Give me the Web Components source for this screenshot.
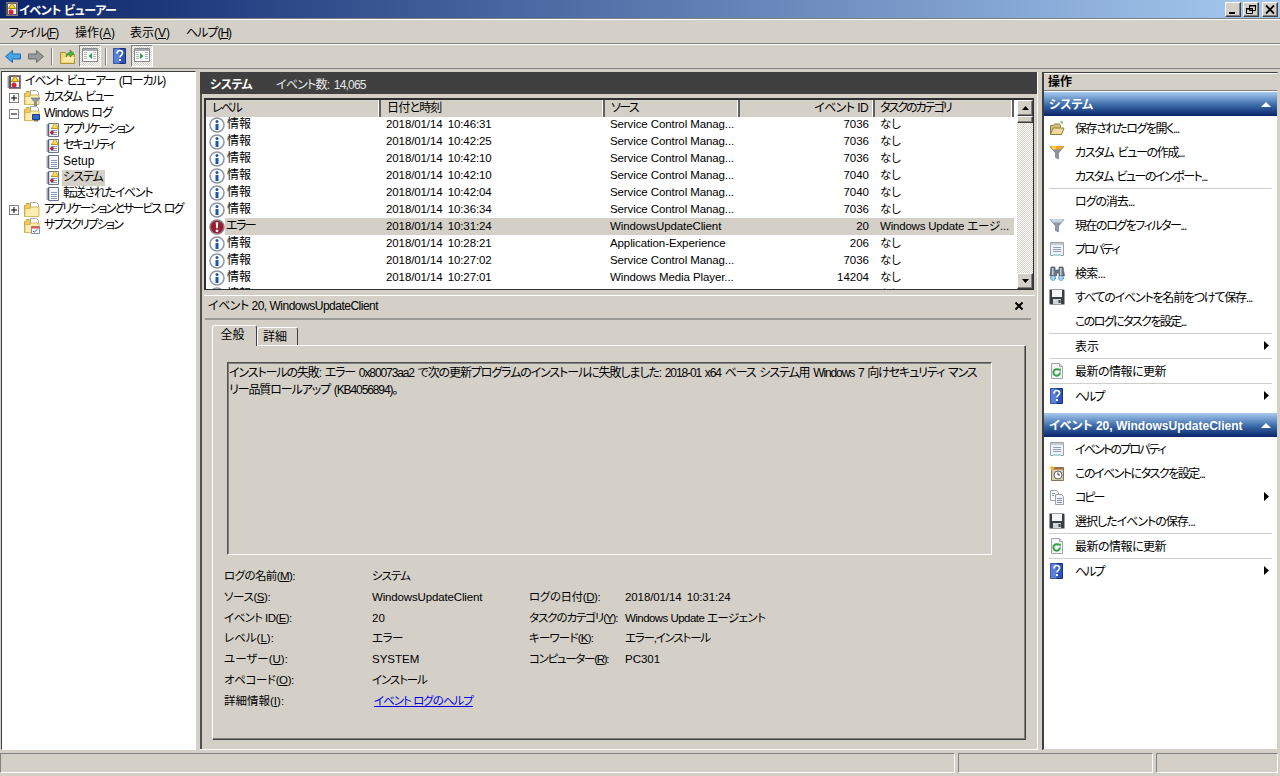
<!DOCTYPE html>
<html lang="ja">
<head>
<meta charset="utf-8">
<title>イベント ビューアー</title>
<style>
html, body { margin: 0; height: 100%; overflow: hidden; }
body {
    background: #d4d0c8;
    color: #000;
    font: 12px "Liberation Sans", "Noto Sans CJK JP", sans-serif;
    font-feature-settings: "palt";
}
#app { display: flex; flex-direction: column; width: 1280px; height: 776px; }
#main { flex: 1; display: flex; min-height: 0; }
</style>
</head>
<body>
<div id="app">
    <ev-titlebar style="letter-spacing:-.4px">イベント ビューアー</ev-titlebar>
    <ev-menubar>
        <span style="letter-spacing:-1.1px">ファイル(<u>F</u>)</span>
        <span>操作(<u>A</u>)</span>
        <span>表示(<u>V</u>)</span>
        <span style="letter-spacing:-1px">ヘルプ(<u>H</u>)</span>
    </ev-menubar>
    <ev-toolbar></ev-toolbar>
    <div id="main">
        <ev-tree>
            <ev-tree-item style="letter-spacing:-1.3px;word-spacing:2px" level="0" icon="root">イベント ビューアー (ローカル)</ev-tree-item>
            <ev-tree-item style="letter-spacing:-1.6px;word-spacing:2px" level="1" icon="folderfilter" toggle="+">カスタム ビュー</ev-tree-item>
            <ev-tree-item style="letter-spacing:-.6px" level="1" icon="folderlog" toggle="-">Windows ログ</ev-tree-item>
            <ev-tree-item style="letter-spacing:-2px" level="2" icon="log">アプリケーション</ev-tree-item>
            <ev-tree-item style="letter-spacing:-1.8px" level="2" icon="log">セキュリティ</ev-tree-item>
            <ev-tree-item level="2" icon="note">Setup</ev-tree-item>
            <ev-tree-item style="letter-spacing:-1px" level="2" icon="log" selected>システム</ev-tree-item>
            <ev-tree-item style="letter-spacing:-1.3px" level="2" icon="note">転送されたイベント</ev-tree-item>
            <ev-tree-item style="letter-spacing:-1.9px;word-spacing:2px" level="1" icon="foldersvc" toggle="+">アプリケーションとサービス ログ</ev-tree-item>
            <ev-tree-item style="letter-spacing:-1.9px" level="1" icon="foldersub">サブスクリプション</ev-tree-item>
        </ev-tree>
        <ev-center>
            <ev-grid>
                <ev-row level="情報" date="2018/01/14 10:46:31" source="Service Control Manag..." eid="7036" task="なし"></ev-row>
                <ev-row level="情報" date="2018/01/14 10:42:25" source="Service Control Manag..." eid="7036" task="なし"></ev-row>
                <ev-row level="情報" date="2018/01/14 10:42:10" source="Service Control Manag..." eid="7036" task="なし"></ev-row>
                <ev-row level="情報" date="2018/01/14 10:42:10" source="Service Control Manag..." eid="7040" task="なし"></ev-row>
                <ev-row level="情報" date="2018/01/14 10:42:04" source="Service Control Manag..." eid="7040" task="なし"></ev-row>
                <ev-row level="情報" date="2018/01/14 10:36:34" source="Service Control Manag..." eid="7036" task="なし"></ev-row>
                <ev-row level="エラー" error date="2018/01/14 10:31:24" source="WindowsUpdateClient" eid="20" task="Windows Update エージ..."></ev-row>
                <ev-row level="情報" date="2018/01/14 10:28:21" source="Application-Experience" eid="206" task="なし"></ev-row>
                <ev-row level="情報" date="2018/01/14 10:27:02" source="Service Control Manag..." eid="7036" task="なし"></ev-row>
                <ev-row level="情報" date="2018/01/14 10:27:01" source="Windows Media Player..." eid="14204" task="なし"></ev-row>
                <ev-row level="情報" date="2018/01/14 10:26:58" source="Service Control Manag..." eid="7036" task="なし"></ev-row>
            </ev-grid>
            <ev-detail></ev-detail>
        </ev-center>
        <ev-actions>
            <ev-action-group label="システム">
                <ev-action style="letter-spacing:-1.4px" icon="open">保存されたログを開く...</ev-action>
                <ev-action style="letter-spacing:-1.3px;word-spacing:2px" icon="filtery">カスタム ビューの作成...</ev-action>
                <ev-action style="letter-spacing:-1.5px;word-spacing:2px">カスタム ビューのインポート...</ev-action>
                <ev-action style="letter-spacing:-1.1px" sep>ログの消去...</ev-action>
                <ev-action style="letter-spacing:-1.5px" icon="filter">現在のログをフィルター...</ev-action>
                <ev-action style="letter-spacing:-2px" icon="props">プロパティ</ev-action>
                <ev-action style="letter-spacing:-.8px" icon="binoc">検索...</ev-action>
                <ev-action style="letter-spacing:-1.2px" icon="save">すべてのイベントを名前をつけて保存...</ev-action>
                <ev-action style="letter-spacing:-1.6px">このログにタスクを設定...</ev-action>
                <ev-action sep more>表示</ev-action>
                <ev-action style="letter-spacing:-.5px" sep icon="refresh">最新の情報に更新</ev-action>
                <ev-action style="letter-spacing:-2px" sep icon="help" more>ヘルプ</ev-action>
            </ev-action-group>
            <ev-action-group label="イベント 20, WindowsUpdateClient">
                <ev-action style="letter-spacing:-1.8px" icon="props">イベントのプロパティ</ev-action>
                <ev-action style="letter-spacing:-1.5px" icon="clock">このイベントにタスクを設定...</ev-action>
                <ev-action style="letter-spacing:-2px" icon="copy" more>コピー</ev-action>
                <ev-action style="letter-spacing:-1px" icon="save">選択したイベントの保存...</ev-action>
                <ev-action style="letter-spacing:-.5px" sep icon="refresh">最新の情報に更新</ev-action>
                <ev-action style="letter-spacing:-2px" sep icon="help" more>ヘルプ</ev-action>
            </ev-action-group>
        </ev-actions>
    </div>
    <ev-statusbar></ev-statusbar>
</div>

<script>
const RAISED = 'border:1px solid; border-color:#fff #404040 #404040 #fff; box-shadow:inset -1px -1px #808080;';

const logBase = `<path d="M3.500 1.500h10v13h-10z" fill="#f6f8fc" stroke="#67748f"/>
    <path d="M1.500 3h3M1.500 5h3M1.500 7h3M1.500 9h3M1.500 11h3M1.500 13h3" stroke="#46536e"/>
    <path d="M6 6.500h6M6 8.500h6M6 10.500h6M6 12.500h6" stroke="#8a9ab8"/>`;
const folderBack = `<path d="M.5 14.500v-11h1l1-2h3l1 2h8v11z" fill="#eec95c" stroke="#c9a64a"/>
    <path d="M6.500 .5h6l2 2v7h-8z" fill="#fff" stroke="#a8a8a8"/>`;
const folderFront = `<path d="M1 14.500v-8h5l1-1.500h8v9.500z" fill="#fdeeb0" stroke="#d8b65c"/>`;
const pane = (inner) => `<path d="M.5 .5h15v13h-15z" fill="#fff" stroke="#8a8a8a"/><path d="M1 1h14v2H1z" fill="#a3acb8"/>
    <path d="M2 4.500h3M2 6.500h3M2 8.500h3M2 10.500h3M11 4.500h3M11 6.500h3M11 8.500h3M11 10.500h3" stroke="#a9b7c6"/>${inner}`;

const ICONS = {
    root: `<path d="M3 1h12v14H3z" fill="#8d7a72"/><path d="M4.500 2.500h9v11h-9z" fill="#eef0f5" stroke="#59647c"/>
        <path d="M1.500 3h3M1.500 5h3M1.500 7h3M1.500 9h3M1.500 11h3M1.500 13h3" stroke="#333"/>
        <path d="M9 2l3.500 5.500h-7z" fill="#ffd83a" stroke="#a98410"/><circle cx="8" cy="11" r="2.500" fill="#d2263a"/>`,
    log: `${logBase}<path d="M10 .8l3.500 5.700h-7z" fill="#ffe04a" stroke="#b59014" stroke-width=".8"/><circle cx="7" cy="10.500" r="1.800" fill="#b8202e"/>`,
    note: logBase,
    folderfilter: `${folderBack}${folderFront}<path d="M7 8h9l-3.500 4V16h-2v-4z" fill="#8d99a8" stroke="#5d6978" stroke-width=".6"/>`,
    folderlog: `${folderBack}${folderFront}<path d="M8.500 8.500h7v5h-7z" fill="#2f6bd0" stroke="#1b3f8a"/><path d="M10 14h4v1.500h-4z" fill="#777"/>`,
    foldersvc: `${folderBack}${folderFront}`,
    foldersub: `${folderBack}${folderFront}<path d="M7.500 8.500h8v7h-8z" fill="#fff" stroke="#8390a5"/><path d="M7.500 8.500h8v2h-8z" fill="#d9534f"/><path d="M9 13l1.300 1.300L13.500 11" fill="none" stroke="#2a62c8"/>`,
    info: `<circle cx="8" cy="8" r="7" fill="#fff" stroke="#8b93a6" stroke-width="1.500"/><circle cx="8" cy="4.500" r="1.500" fill="#1d55b3"/><path d="M6.500 7h3v6h-3z" fill="#1d55b3"/>`,
    error: `<circle cx="8" cy="8" r="7" fill="#9c1c32" stroke="#8b8089" stroke-width="1.500"/><path d="M6.700 3.300h2.600l-.5 6h-1.600z" fill="#fff"/><circle cx="8" cy="11.800" r="1.400" fill="#fff"/>`,
    open: `<path d="M1.500 14.500v-9h3l1-1.500h5l1 1.500v2" fill="#d6be7b" stroke="#8f7c42"/><path d="M1.500 14.500l2.500-6.500h11l-2.500 6.500z" fill="#eeda9e" stroke="#8f7c42"/><path d="M11 2h3M13 1v3" stroke="#6dbb58"/>`,
    filtery: `<path d="M1 2.500h14L9.500 9v6l-3-1.500V9z" fill="#8793a3" stroke="#66717f" stroke-width=".6"/><path d="M1 2h14l-3 3.500H4z" fill="#f3a71e"/><circle cx="5" cy="3.500" r="2" fill="#ffd64a"/>`,
    filter: `<path d="M1 2.500h14L9.500 9v6l-3-1.500V9z" fill="#8d99a8" stroke="#66717f" stroke-width=".6"/><path d="M1 2h14l-3 3.500H4z" fill="#c6d4e2"/>`,
    props: `<path d="M1.500 1.500h13v13h-13z" fill="#f1f3f6" stroke="#9aa2ad"/><path d="M2 2h12v2H2z" fill="#c3cbd6"/><path d="M4 6.500h8M4 8.500h8M4 10.500h8" stroke="#8ea1b8"/><path d="M4 13h8v2H4z" fill="#b8d0e4"/>`,
    binoc: `<path d="M2 2h4v3h4V2h4l1.500 9h-5.500V8H7.500v3H1z" fill="#6d7683" stroke="#3e4550" stroke-width=".6"/><path d="M3 3h1.500v7H3zM11 3h1.500v7H11z" fill="#c8ced6"/><circle cx="4" cy="13" r="2.500" fill="#9fd0f0" stroke="#2b6ca8" stroke-dasharray="1 1"/><circle cx="12" cy="13" r="2.500" fill="#9fd0f0" stroke="#2b6ca8" stroke-dasharray="1 1"/>`,
    save: `<path d="M.5 .5h14l1 1v14H.5z" fill="#3a3f46"/><path d="M3 1h10v7H3z" fill="#f4f5f7"/><path d="M4 10h8v5H4z" fill="#d2d5da"/><path d="M9.500 11h2v3h-2z" fill="#3a3f46"/>`,
    refresh: `<path d="M2.500 .5h8l3 3v12h-11z" fill="#f4f5f6" stroke="#a0a4a8"/><path d="M10.500 .5v3h3" fill="#ddd" stroke="#a0a4a8"/><path d="M11 9.500a3.300 3.300 0 1 1-1.200-2.600" fill="none" stroke="#34a24a" stroke-width="2"/><path d="M8.500 5.500l3.500.2-.7 3.300z" fill="#34a24a"/>`,
    help: `<path d="M1.500 .5h12v15h-12z" fill="#2d55b8" stroke="#1d2f78"/><path d="M1.500 .5h6v15h-6z" fill="#5a80d8"/><path d="M5 5.500C5 3.500 6 2.500 7.800 2.500c1.800 0 2.700 1 2.700 2.500 0 2-2.500 2.200-2.500 4.500" fill="none" stroke="#fff" stroke-width="1.700"/><path d="M7 11h2v2H7z" fill="#fff"/>`,
    clock: `<path d="M2.500 2.500h12v13h-12z" fill="#d8cfa8" stroke="#85765a"/><path d="M2.500 2.500h12v2h-12z" fill="#a06a3c"/><circle cx="9" cy="10" r="4" fill="#fff" stroke="#5b6470"/><path d="M9 7.500V10h2" fill="none" stroke="#333"/><path d="M3 0l1 2 2 1-2 1-1 2-1-2-2-1 2-1z" fill="#f5c22e"/>`,
    copy: `<path d="M1.500 1.500h6l2 2v8h-8z" fill="#fff" stroke="#9aa2ad"/><path d="M6.500 5.500h6l2 2v8h-8z" fill="#f3f5f8" stroke="#9aa2ad"/><path d="M3 4.500h3M3 6.500h2M8 9.500h5M8 11.500h5M8 13.500h5" stroke="#7f92ad"/>`,
    back: `<path d="M.5 8.500l7-6v3.500h8v5h-8v3.500z" fill="#49a4ea" stroke="#1e6cb0"/>`,
    forward: `<path d="M16.500 8.500l-7-6v3.500h-8v5h8v3.500z" fill="#9a9a9a" stroke="#6a6a6a"/>`,
    up: `<path d="M.5 15.500v-11h5l1 2h8v9z" fill="#f1d777" stroke="#a98d3c"/><path d="M2 14l2-5h11l-2 5z" fill="#fbe9a5"/><path d="M6 9c0-3 2-4.500 4-4.500V2l4 3.500-4 3.500V6.800C8 6.800 7 7.500 6 9z" fill="#4eb23e" stroke="#2c7a22" stroke-width=".6"/>`,
    paneleft: pane(`<path d="M10 5v6L6.500 8z" fill="#2b9a3c"/>`),
    paneright: pane(`<path d="M6 5v6L9.500 8z" fill="#2b9a3c"/>`)
};

class EvIcon extends HTMLElement {
    connectedCallback() {
        const size = this.getAttribute('size') || 16;
        this.attachShadow({ mode: 'open' }).innerHTML = `
        <style>
        :host { display: block; width: ${size}px; height: ${size}px; flex: none; }
        svg { display: block; }
        </style>
        <svg width="${size}" height="${size}" viewBox="0 0 ${size} ${size}">${ICONS[this.getAttribute('name')] || ''}</svg>`;
    }
}

class EvTitlebar extends HTMLElement {
    connectedCallback() {
        this.attachShadow({ mode: 'open' }).innerHTML = `
        <style>
        :host {
            display: flex; align-items: center; height: 18px; padding: 0 2px 0 3px; flex: none;
            background: linear-gradient(90deg, #0a246a, #a6caf0);
            color: #fff; font-weight: bold;
        }
        .name { flex: 1; white-space: nowrap; }
        .buttons { display: flex; gap: 2px; }
        .btn { width: 14px; height: 13px; background: #d4d0c8; ${RAISED} position: relative; }
        .btn svg { display: block; }
        .buttons .btn:nth-child(2) { margin-right: 1px; }
        </style>
        <ev-icon name="root"></ev-icon>
        <span class="name"><slot></slot></span>
        <div class="buttons">
            <div class="btn"><svg width="14" height="13"><path d="M3 9h6v2H3z"/></svg></div>
            <div class="btn"><svg width="14" height="13"><path d="M5.500 2.500h6v5h-6zM2.500 5.500h6v5h-6z" fill="#d4d0c8" stroke="#000"/><path d="M5 2h7v1.500H5zM2 5h7v1.500H2z"/></svg></div>
            <div class="btn"><svg width="14" height="13"><path d="M3 2.500l8 8M11 2.500l-8 8" stroke="#000" stroke-width="1.800"/></svg></div>
        </div>`;
    }
}

class EvMenubar extends HTMLElement {
    connectedCallback() {
        this.attachShadow({ mode: 'open' }).innerHTML = `
        <style>
        :host {
            display: flex; align-items: center; height: 24px; padding-left: 9px; flex: none;
            border-top: 1px solid #808080; box-shadow: inset 0 1px #fff;
        }
        ::slotted(span:nth-child(1)) { width: 66px; }
        ::slotted(span:nth-child(2)) { width: 55px; }
        ::slotted(span:nth-child(3)) { width: 56px; }
        </style>
        <slot></slot>`;
    }
}

class EvToolbar extends HTMLElement {
    connectedCallback() {
        this.attachShadow({ mode: 'open' }).innerHTML = `
        <style>
        :host {
            display: flex; align-items: center; height: 24px; padding-left: 5px; flex: none;
            border-top: 1px solid #808080; box-shadow: inset 0 1px #fff;
            border-bottom: 1px solid #808080;
        }
        .sep { width: 1px; height: 17px; background: #808080; border-right: 1px solid #fff; margin: 0 7px; }
        .on {
            display: flex; align-items: center; justify-content: center;
            width: 20px; height: 20px; border: 1px solid; border-color: #808080 #fff #fff #808080;
            background: repeating-conic-gradient(#fff 0 25%, #d4d0c8 0 50%) 0 0 / 2px 2px;
        }
        </style>
        <ev-icon name="back" size="17"></ev-icon>
        <div style="width:5px"></div>
        <ev-icon name="forward" size="17"></ev-icon>
        <div class="sep"></div>
        <ev-icon name="up"></ev-icon>
        <div style="width:3px"></div>
        <div class="on"><ev-icon name="paneleft"></ev-icon></div>
        <div class="sep" style="margin:0 5px 0 4px"></div>
        <ev-icon name="help"></ev-icon>
        <div style="width:3px"></div>
        <div class="on"><ev-icon name="paneright"></ev-icon></div>`;
    }
}

class EvTree extends HTMLElement {
    connectedCallback() {
        this.attachShadow({ mode: 'open' }).innerHTML = `
        <style>
        :host {
            display: block; width: 195px; margin: 2px 4px 1px 1px; flex: none;
            background: #fff; border: 1px solid; border-color: #404040 #fff #fff #404040;
            box-sizing: border-box;
        }
        .inner { padding-top: 2px; }
        </style>
        <div class="inner"><slot></slot></div>`;
    }
}

class EvTreeItem extends HTMLElement {
    connectedCallback() {
        const level = +this.getAttribute('level');
        const toggle = this.getAttribute('toggle');
        const pad = [4, 22, 43][level];
        this.attachShadow({ mode: 'open' }).innerHTML = `
        <style>
        :host {
            display: flex; align-items: center; height: 16px; padding-left: ${pad}px;
            position: relative; white-space: nowrap;
        }
        .txt { margin-left: ${level == 1 ? 3 : level == 2 ? 1 : 2}px; padding: 0 2px 1px 1px; line-height: 15px; }
        :host([selected]) .txt { background: #d4d0c8; }
        .box {
            position: absolute; left: 7px; top: 3px; width: 8px; height: 8px;
            border: 1px solid #808080; background: #fff;
        }
        .box svg { display: block; }
        </style>
        ${toggle ? `<div class="box"><svg width="8" height="8"><path d="${toggle == '+' ? 'M1 3.500h6v1H1zM3.500 1h1v6h-1z' : 'M1 3.500h6v1H1z'}"/></svg></div>` : ''}
        <ev-icon name="${this.getAttribute('icon')}"></ev-icon>
        <span class="txt"><slot></slot></span>`;
    }
}

class EvCenter extends HTMLElement {
    connectedCallback() {
        this.attachShadow({ mode: 'open' }).innerHTML = `
        <style>
        :host {
            display: flex; flex-direction: column; width: 838px; margin: 3px 0 1px 0; flex: none;
            box-sizing: border-box; border-right: 1px solid #fff; border-bottom: 1px solid #fff;
        }
        .head {
            display: flex; align-items: center; height: 22px; flex: none; padding-left: 10px;
            background: #404040; color: #fff;
        }
        .head b { width: 66px; letter-spacing: -.5px; }
        .head span { color: #e8e8e8; letter-spacing: -.8px; word-spacing: 2px; }
        .body {
            flex: 1; display: flex; flex-direction: column; min-height: 0;
            border-left: 2px solid #505050; padding: 4px 2px 0 2px;
        }
        </style>
        <div class="head"><b>システム</b><span>イベント数: 14,065</span></div>
        <div class="body"><slot></slot></div>`;
    }
}

class EvGrid extends HTMLElement {
    connectedCallback() {
        this.attachShadow({ mode: 'open' }).innerHTML = `
        <style>
        :host {
            display: flex; height: 192px; flex: none; box-sizing: border-box; overflow: hidden;
            border: 2px solid #303030; border-right-width: 1px; border-bottom-width: 1px;
            background: #fff; margin-right: 1px;
        }
        .table { flex: 1; min-width: 0; overflow: hidden; }
        .cols { display: grid; grid-template-columns: 175px 224px 135px 135px 139px; height: 16px; }
        .cols div {
            box-sizing: border-box; background: #d4d0c8; padding-left: 6px; line-height: 17px;
            border-right: 2px solid #606060; white-space: nowrap;
            box-shadow: inset -1px 0 #fff; letter-spacing: -1.6px;
        }
        .cols .date { letter-spacing: -.8px; }
        .cols .num { text-align: right; padding: 0 5px 0 0; letter-spacing: -.6px; }
        .cols .last { padding-left: 5px; letter-spacing: -2px; }
        .bar { width: 16px; flex: none; display: flex; flex-direction: column;
            background: repeating-conic-gradient(#fff 0 25%, #d4d0c8 0 50%) 0 0 / 2px 2px; }
        .arrow { height: 14px; background: #d4d0c8; ${RAISED} flex: none; display: flex; align-items: center; justify-content: center; width: 14px; }
        .thumb { height: 5px; width: 14px; background: #d4d0c8; ${RAISED} flex: none; }
        .fill { flex: 1; }
        </style>
        <div class="table">
            <div class="cols"><div>レベル</div><div class="date">日付と時刻</div><div>ソース</div><div class="num">イベント ID</div><div class="last">タスクのカテゴリ</div></div>
            <slot></slot>
        </div>
        <div class="bar">
            <div class="arrow"><svg width="7" height="4"><path d="M3.500 0L7 4H0z"/></svg></div>
            <div class="thumb"></div>
            <div class="fill"></div>
            <div class="arrow"><svg width="7" height="4"><path d="M0 0h7L3.500 4z"/></svg></div>
        </div>`;
    }
}

class EvRow extends HTMLElement {
    connectedCallback() {
        const a = (n) => this.getAttribute(n);
        const err = this.hasAttribute('error');
        this.attachShadow({ mode: 'open' }).innerHTML = `
        <style>
        :host {
            display: grid; grid-template-columns: 19px 156px 224px 135px 135px 139px;
            height: 17px; white-space: nowrap; font-size: 11.500px; line-height: 17px;
        }
        .ico { display: flex; align-items: center; padding-left: 3px; }
        :host([error]) div:not(.ico) { background: #d4d0c8; }
        .lv { padding-left: ${err ? 1 : 2}px; font-size: 12px; letter-spacing: ${err ? -1.5 : 0}px; }
        .d { padding-left: 5px; word-spacing: 2px; letter-spacing: -.1px; }
        .s { padding-left: 5px; letter-spacing: -.1px; }
        .n { text-align: right; padding-right: 6px; }
        .t { padding-left: 5px; overflow: hidden; letter-spacing: -.2px; }
        </style>
        <div class="ico"><ev-icon name="${err ? 'error' : 'info'}"></ev-icon></div>
        <div class="lv">${a('level')}</div>
        <div class="d">${a('date')}</div>
        <div class="s">${a('source')}</div>
        <div class="n">${a('eid')}</div>
        <div class="t">${a('task')}</div>`;
    }
}

class EvField extends HTMLElement {
    connectedCallback() {
        this.attachShadow({ mode: 'open' }).innerHTML = `
        <style>
        :host { display: block; line-height: 20.750px; white-space: nowrap; font-size: 11.500px; }
        </style>
        <slot></slot>`;
    }
}

class EvDetail extends HTMLElement {
    connectedCallback() {
        const ls = (v) => `style="letter-spacing:${v}px"`;
        this.attachShadow({ mode: 'open' }).innerHTML = `
        <style>
        :host {
            flex: 1; display: flex; flex-direction: column; margin-top: 5px; min-height: 0;
            border-top: 1px solid #fff; position: relative;
        }
        .title {
            height: 22px; line-height: 21px; padding-left: 3px; flex: none; letter-spacing: -.5px;
            border-bottom: 2px solid #9c9a94; margin: 0 4px 0 1px; display: flex; justify-content: space-between;
        }
        .close { margin: 5px 7px 0 0; }
        .tabs { display: flex; align-items: flex-end; height: 25px; padding-left: 8px; flex: none; }
        .tab {
            box-sizing: border-box; border: 1px solid; border-color: #fff #404040 transparent #fff;
            border-bottom: 0; text-align: center; border-radius: 3px 3px 0 0;
        }
        .tab.on { width: 45px; height: 21px; line-height: 19px; padding-right: 4px; position: relative; top: 1px; background: #d4d0c8; z-index: 1; }
        .tab.off { width: 41px; height: 18px; line-height: 18px; padding-right: 5px; }
        .page {
            box-sizing: border-box; height: 395px; margin: 0 9px 0 8px; flex: none;
            border: 1px solid; border-color: #fff #404040 #404040 #fff;
            box-shadow: inset -1px -1px #808080;
            padding: 16px 33px 0 14px;
        }
        .msg {
            box-sizing: border-box; height: 193px; padding: 2px 14px 2px 1px; line-height: 17px;
            border: 1px solid; border-color: #505050 #fff #fff #505050;
            box-shadow: inset 1px 1px #808080; letter-spacing: -1.1px; word-spacing: 1.5px;
        }
        .fields {
            display: grid; grid-template-columns: 148px 157px 96px 1fr;
            margin: 11px 0 0 -3px;
        }
        u { text-underline-offset: 1px; }
        a { color: #0000e0; text-decoration: underline; }
        </style>
        <div class="title"><span>イベント 20, WindowsUpdateClient</span>
            <svg class="close" width="10" height="10"><path d="M1.500 1.500l7 7M8.500 1.500l-7 7" stroke="#000" stroke-width="2"/></svg></div>
        <div class="tabs"><div class="tab on">全般</div><div class="tab off">詳細</div></div>
        <div class="page">
            <div class="msg">インストールの失敗: エラー 0x80073aa2 で次の更新プログラムのインストールに失敗しました: 2018-01 x64 ベース システム用 Windows 7 向けセキュリティ マンスリー品質ロールアップ (KB4056894)。</div>
            <div class="fields">
                <ev-field ${ls(-.6)}>ログの名前(<u>M</u>):</ev-field><ev-field ${ls(-1)}>システム</ev-field><ev-field></ev-field><ev-field></ev-field>
                <ev-field ${ls(-.4)}>ソース(<u>S</u>):</ev-field><ev-field ${ls(-.15)}>WindowsUpdateClient</ev-field><ev-field ${ls(-.4)}>ログの日付(<u>D</u>):</ev-field><ev-field style="word-spacing:2px;letter-spacing:-.1px">2018/01/14 10:31:24</ev-field>
                <ev-field ${ls(-.6)}>イベント ID(<u>E</u>):</ev-field><ev-field>20</ev-field><ev-field ${ls(-1.1)}>タスクのカテゴリ(<u>Y</u>):</ev-field><ev-field ${ls(-.55)}>Windows Update エージェント</ev-field>
                <ev-field>レベル(<u>L</u>):</ev-field><ev-field ${ls(-.5)}>エラー</ev-field><ev-field ${ls(-.8)}>キーワード(<u>K</u>):</ev-field><ev-field ${ls(-1.2)}>エラー,インストール</ev-field>
                <ev-field>ユーザー(<u>U</u>):</ev-field><ev-field>SYSTEM</ev-field><ev-field ${ls(-1.3)}>コンピューター(<u>R</u>):</ev-field><ev-field>PC301</ev-field>
                <ev-field ${ls(-.4)}>オペコード(<u>O</u>):</ev-field><ev-field ${ls(-1.1)}>インストール</ev-field><ev-field></ev-field><ev-field></ev-field>
                <ev-field>詳細情報(<u>I</u>):</ev-field><ev-field style="padding-left:2px;letter-spacing:-1px"><a href="#">イベント ログのヘルプ</a></ev-field><ev-field></ev-field><ev-field></ev-field>
            </div>
        </div>`;
    }
}

class EvActions extends HTMLElement {
    connectedCallback() {
        this.attachShadow({ mode: 'open' }).innerHTML = `
        <style>
        :host {
            display: block; width: 236px; margin: 3px 0 1px 4px; flex: none; box-sizing: border-box;
            background: #fff; border: 1px solid; border-color: #404040 #d4d0c8 #d4d0c8 #404040;
            border-left-width: 2px;
        }
        .head {
            height: 17px; line-height: 18px; padding-left: 4px; background: #d4d0c8; font-weight: bold;
            border-bottom: 1px solid #808080; box-shadow: inset 0 1px #fff; margin-bottom: 1px;
        }
        </style>
        <div class="head">操作</div>
        <slot></slot>`;
    }
}

class EvActionGroup extends HTMLElement {
    connectedCallback() {
        this.attachShadow({ mode: 'open' }).innerHTML = `
        <style>
        :host { display: block; margin-bottom: 5px; }
        .bar {
            display: flex; align-items: center; justify-content: space-between;
            height: 24px; padding: 0 6px 0 5px; color: #fff; font-weight: bold;
            background: linear-gradient(#a6caf0, #3a69a8 55%, #0a246a);
        }
        .bar span { margin-top: -2px; }
        </style>
        <div class="bar"><span>${this.getAttribute('label')}</span><svg width="10" height="5"><path d="M5 0l5 5H0z" fill="#fff"/></svg></div>
        <slot></slot>`;
    }
}

class EvAction extends HTMLElement {
    connectedCallback() {
        const icon = this.getAttribute('icon');
        this.attachShadow({ mode: 'open' }).innerHTML = `
        <style>
        :host { display: block; white-space: nowrap; }
        .sep { height: 1px; background: #d0cec8; margin: 0 5px; }
        .row { display: flex; align-items: center; height: 24px; padding-left: 5px; position: relative; }
        .ic { width: 16px; height: 16px; margin-right: 10px; flex: none; }
        .txt { margin-top: -2px; }
        .more { position: absolute; right: 8px; top: 7px; }
        </style>
        ${this.hasAttribute('sep') ? '<div class="sep"></div>' : ''}
        <div class="row">
            <div class="ic">${icon ? `<ev-icon name="${icon}"></ev-icon>` : ''}</div>
            <span class="txt"><slot></slot></span>
            ${this.hasAttribute('more') ? '<svg class="more" width="5" height="9"><path d="M0 0l5 4.500L0 9z"/></svg>' : ''}
        </div>`;
    }
}

class EvStatusbar extends HTMLElement {
    connectedCallback() {
        this.attachShadow({ mode: 'open' }).innerHTML = `
        <style>
        :host { display: flex; gap: 3px; height: 20px; margin: 2px 2px 3px 0; flex: none; }
        div { box-sizing: border-box; border: 1px solid; border-color: #808080 #fff #fff #808080; }
        .a { flex: 1; }
        .b { width: 195px; }
        .c { width: 122px; }
        </style>
        <div class="a"></div><div class="b"></div><div class="c"></div>`;
    }
}

customElements.define('ev-icon', EvIcon);
customElements.define('ev-titlebar', EvTitlebar);
customElements.define('ev-menubar', EvMenubar);
customElements.define('ev-toolbar', EvToolbar);
customElements.define('ev-tree', EvTree);
customElements.define('ev-tree-item', EvTreeItem);
customElements.define('ev-center', EvCenter);
customElements.define('ev-grid', EvGrid);
customElements.define('ev-row', EvRow);
customElements.define('ev-field', EvField);
customElements.define('ev-detail', EvDetail);
customElements.define('ev-actions', EvActions);
customElements.define('ev-action-group', EvActionGroup);
customElements.define('ev-action', EvAction);
customElements.define('ev-statusbar', EvStatusbar);
</script>
</body>
</html>
